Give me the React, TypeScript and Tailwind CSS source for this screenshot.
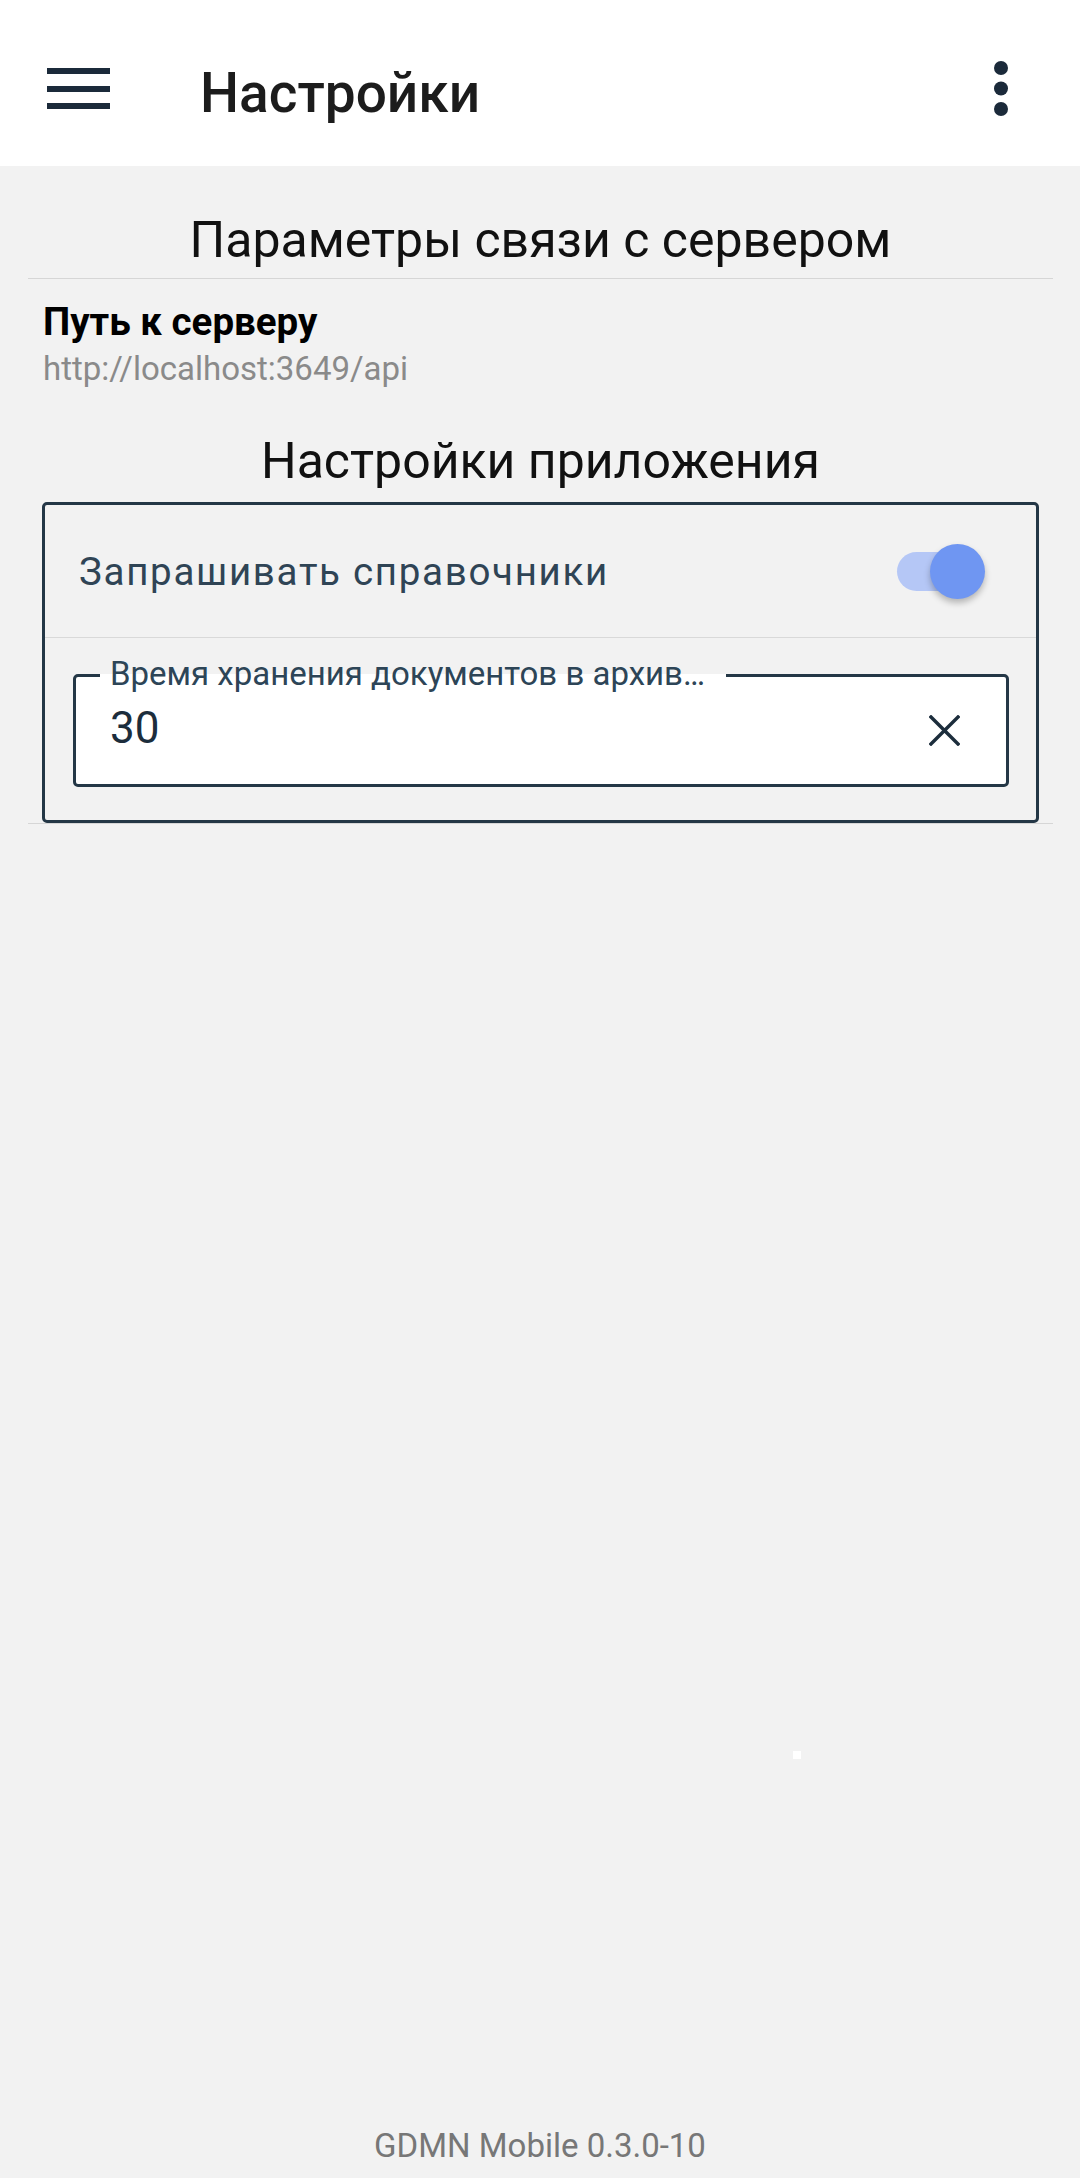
import React from "react";

function MenuIcon() {
  return (
    <svg width="63" height="41" viewBox="0 0 63 41" className="block">
      <rect x="0" y="0" width="63" height="6" fill="#1b2a3a" />
      <rect x="0" y="18" width="63" height="6" fill="#1b2a3a" />
      <rect x="0" y="35" width="63" height="6" fill="#1b2a3a" />
    </svg>
  );
}

function DotsIcon() {
  return (
    <svg width="14" height="55" viewBox="0 0 14 55" className="block">
      <circle cx="7" cy="7" r="7" fill="#1b2a3a" />
      <circle cx="7" cy="27.5" r="7" fill="#1b2a3a" />
      <circle cx="7" cy="48" r="7" fill="#1b2a3a" />
    </svg>
  );
}

function CloseIcon() {
  return (
    <svg width="31" height="31" viewBox="0 0 31 31" className="block">
      <path d="M2 2 L29 29 M29 2 L2 29" stroke="#1c2d3c" strokeWidth="3.4" strokeLinecap="square" fill="none" />
    </svg>
  );
}

export default function App() {
  return (
    <div className="relative w-[1080px] min-h-[2178px] bg-[#f2f2f2] flex flex-col font-['Roboto',sans-serif]">
      <header className="h-[166px] bg-white flex items-start shrink-0">
        <div className="ml-[47px] mt-[68px]">
          <MenuIcon />
        </div>
        <h1 className="ml-[90px] mt-[61px] text-[55px] leading-[64px] font-medium text-[#1c1c1c]">
          Настройки
        </h1>
        <div className="ml-auto mr-[72px] mt-[61px]">
          <DotsIcon />
        </div>
      </header>

      <main className="ml-[28px] mr-[27px]">
        <div className="pt-[45px] pb-[9px] border-b border-[#d6d6d6] text-center text-[50px] leading-[58px] text-[#111]">
          Параметры связи с сервером
        </div>
        <div className="pl-[15px] pt-[20px]">
          <div className="text-[38.5px] leading-[45px] font-bold text-black">Путь к серверу</div>
          <div className="mt-[5px] text-[33px] leading-[39px] text-[#8a8a8a]">http://localhost:3649/api</div>
        </div>

        <div className="pt-[44px] text-center text-[50px] leading-[58px] text-[#111]">
          Настройки приложения
        </div>
        <div className="px-[14px] pt-[12px] border-b border-[#d6d6d6]">
          <div className="border-[3px] border-[#243746] rounded-[5px]">
            <div className="h-[133px] flex items-center justify-between border-b border-[#d9d9d9] pl-[34px] pr-[51px]">
              <span className="text-[38.5px] leading-[45px] tracking-[1.7px] text-[#2f4455]">
                Запрашивать справочники
              </span>
              <div className="relative w-[88px] h-[55px]">
                <div className="absolute left-0 top-[8px] w-[80px] h-[39px] rounded-full bg-[#b5c7f6]" />
                <div className="absolute right-0 top-0 w-[55px] h-[55px] rounded-full bg-[#6f96f2] shadow-[0_4px_6px_rgba(0,0,0,0.25)]" />
              </div>
            </div>
            <div className="pt-[36px] pb-[33px] pl-[28px] pr-[27px]">
              <div className="relative h-[113px] border-[3px] border-[#243746] rounded-[5px] bg-white flex items-center justify-between pl-[34px] pr-[46px] pb-[6px]">
                <div className="absolute -top-[3px] left-[24px] w-[626px] h-[7px] bg-white" />
                <div className="absolute -top-[23px] left-[34px] text-[33px] leading-[39px] text-[#2d4557] whitespace-nowrap">
                  Время хранения документов в архив…
                </div>
                <span className="text-[44px] leading-[52px] text-[#1c2d3c]">30</span>
                <div className="mt-[6px]">
                  <CloseIcon />
                </div>
              </div>
            </div>
          </div>
        </div>
      </main>

      <footer className="mt-auto pb-[12px] text-center text-[33px] leading-[40px] text-[#777]">
        GDMN Mobile 0.3.0-10
      </footer>

      <div className="absolute left-[793px] top-[1751px] w-[8px] h-[8px] bg-white" />
    </div>
  );
}
